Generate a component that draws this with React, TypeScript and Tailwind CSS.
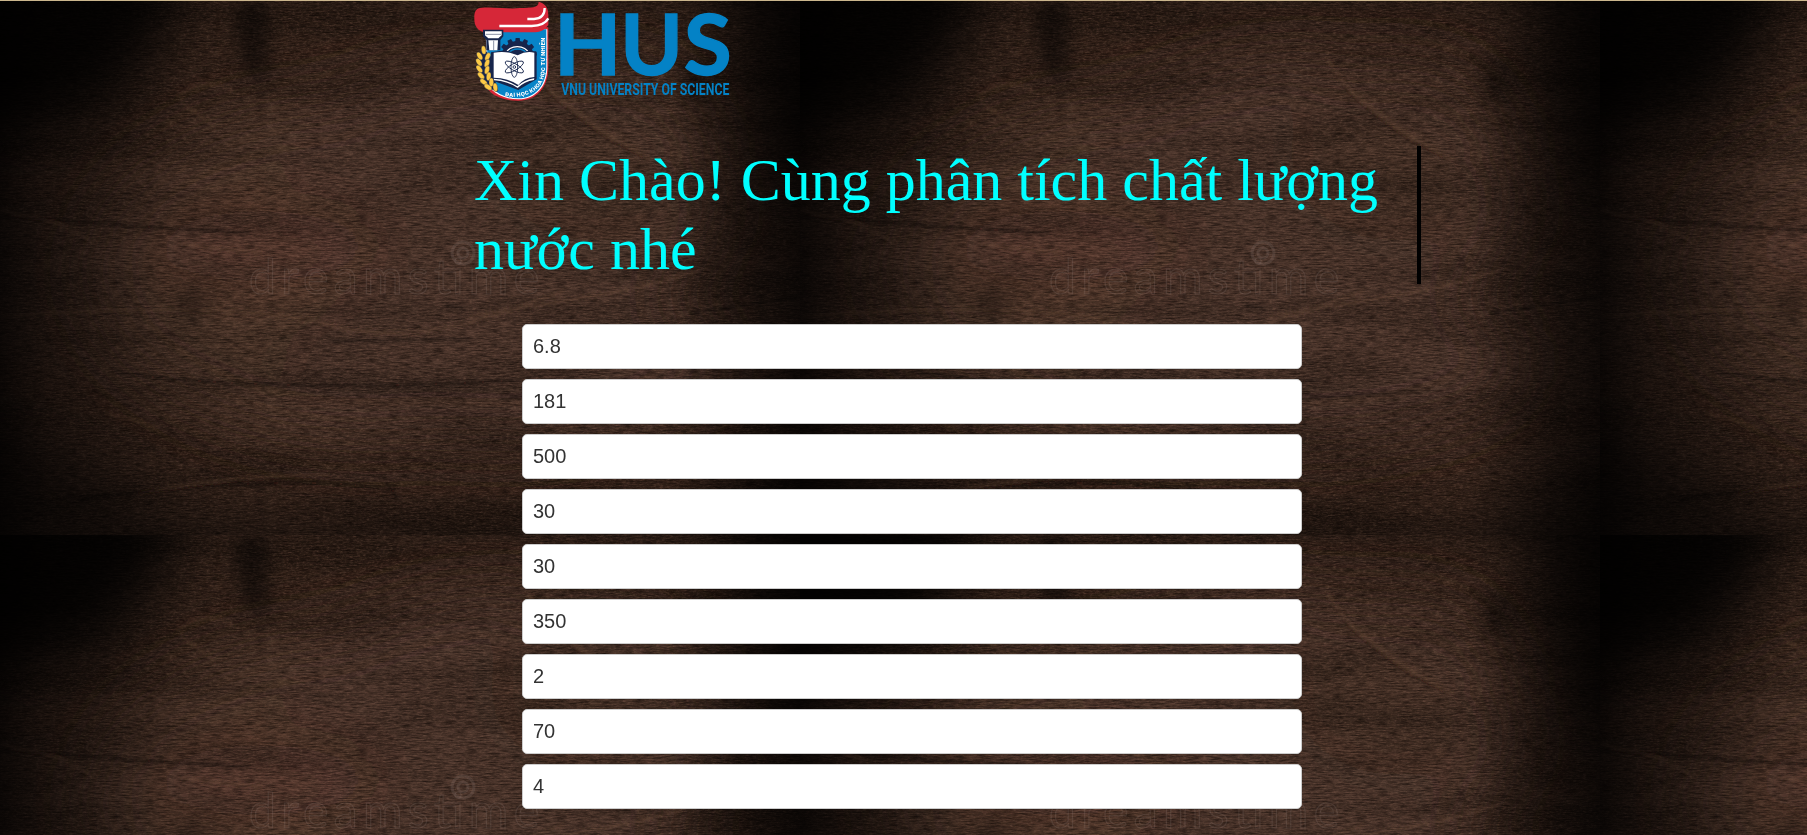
const readings = ["6.8", "181", "500", "30", "30", "350", "2", "70", "4"];

const tiles = [0, 1].flatMap((row) => [0, 1, 2].map((col) => ({ x: col * 800, y: row * 534 })));

function WoodBackground() {
  return (
    <svg
      className="absolute inset-0 -z-10 h-full w-full"
      viewBox="0 0 1807 834"
      preserveAspectRatio="xMinYMin slice"
      aria-hidden="true"
    >
      <defs>
        <linearGradient id="sides">
          <stop offset="0" stopColor="#020101" stopOpacity="0.8" />
          <stop offset="0.06" stopColor="#020101" stopOpacity="0.5" />
          <stop offset="0.22" stopColor="#020101" stopOpacity="0.1" />
          <stop offset="0.35" stopColor="#020101" stopOpacity="0" />
          <stop offset="0.84" stopColor="#020101" stopOpacity="0" />
          <stop offset="0.94" stopColor="#020101" stopOpacity="0.5" />
          <stop offset="1" stopColor="#020101" stopOpacity="0.75" />
        </linearGradient>
        <filter id="soft" x="-60%" y="-60%" width="220%" height="220%">
          <feGaussianBlur stdDeviation="30" />
        </filter>
        <filter id="softer" x="-60%" y="-60%" width="220%" height="220%">
          <feGaussianBlur stdDeviation="9" />
        </filter>
        <filter id="hair" x="-10%" y="-30%" width="120%" height="160%">
          <feGaussianBlur stdDeviation="1.5" />
        </filter>
        <filter id="grain" x="0" y="0" width="100%" height="100%" colorInterpolationFilters="sRGB">
          <feTurbulence type="fractalNoise" baseFrequency="0.09 0.65" numOctaves="4" seed="4" />
          <feColorMatrix values="0 0 0 0 0.03  0 0 0 0 0.01  0 0 0 0 0  1.5 0 0 0 -0.5" />
        </filter>
        <filter id="glint" x="0" y="0" width="100%" height="100%" colorInterpolationFilters="sRGB">
          <feTurbulence type="fractalNoise" baseFrequency="0.3 0.7" numOctaves="3" seed="19" />
          <feColorMatrix values="0 0 0 0 0.52  0 0 0 0 0.38  0 0 0 0 0.31  1.1 0 0 0 -0.45" />
        </filter>
        <filter id="clouds" x="0" y="0" width="100%" height="100%" colorInterpolationFilters="sRGB">
          <feTurbulence type="fractalNoise" baseFrequency="0.005 0.03" numOctaves="4" seed="8" />
          <feColorMatrix values="0 0 0 0 0.02  0 0 0 0 0.01  0 0 0 0 0  2.4 0 0 0 -1" />
        </filter>
        <clipPath id="tileClip">
          <rect width="800" height="534" />
        </clipPath>
        <g id="tile" clipPath="url(#tileClip)">
          <rect width="800" height="534" fill="#38261d" />
          <g filter="url(#soft)">
            <ellipse cx="370" cy="270" rx="280" ry="170" fill="#523a2e" />
            <ellipse cx="500" cy="200" rx="220" ry="140" fill="#50392d" />
            <ellipse cx="260" cy="245" rx="120" ry="35" fill="#5e3d30" />
            <ellipse cx="500" cy="360" rx="220" ry="80" fill="#50392e" />
            <ellipse cx="600" cy="150" rx="110" ry="90" fill="#4b352a" />
          </g>
          <rect width="800" height="534" filter="url(#clouds)" opacity="0.3" />
          <rect width="800" height="534" filter="url(#glint)" opacity="0.75" />
          <rect width="800" height="534" filter="url(#grain)" opacity="0.7" />
          <g filter="url(#hair)" fill="none" strokeWidth="2">
            <g stroke="#76543f" opacity="0.38">
              <path d="M552 92C590 116 618 143 652 158M528 58C543 90 585 120 618 142M178 95Q205 74 234 91M180 100L215 126M0 209C40 218 66 222 90 240M180 243L262 252M0 316C80 310 240 300 330 324S500 312 565 290M105 412L160 426M470 315C565 300 640 290 700 268M140 492Q240 472 330 474" />
            </g>
            <g stroke="#0d0503" opacity="0.5">
              <path d="M544 88C582 119 608 142 645 156M0 216C85 220 126 226 250 232M120 372C230 387 380 388 520 379M445 304L464 307M690 312L800 296M80 498Q310 470 395 490M385 481L398 498M500 398L620 390M330 340L470 338" />
            </g>
          </g>
          <rect width="800" height="534" fill="url(#sides)" />
          <g filter="url(#soft)" fill="#020101">
            <path d="M-60-60H200L155 60L90 115L25 130L-60 140Z" opacity="0.85" />
            <path d="M730-60H860V200H790L750 100Z" opacity="0.55" />
            <path d="M200-60H800V-14L550-10L220-16Z" opacity="0.5" />
            <path d="M-60 405L60 450L200 515L650 530L860 450V620H-60Z" opacity="0.5" />
          </g>
          <g filter="url(#softer)" fill="#060201">
            <path d="M236 0H270L267 85L245 72L235 35Z" opacity="0.5" />
            <path d="M680 65H705L712 110L690 96Z" opacity="0.4" />
            <path d="M175 290L205 285L200 325L180 330Z" opacity="0.25" />
          </g>
          <g fill="none" stroke="#a18f86" strokeOpacity="0.17">
            <text
              x="249"
              y="293"
              fontFamily="Lato, sans-serif"
              fontSize="48"
              textLength="290"
              lengthAdjust="spacing"
              strokeWidth="1.2"
            >
              dreamstime
            </text>
            <circle cx="463" cy="252" r="11" strokeWidth="3" />
            <circle cx="463" cy="252" r="5" strokeWidth="3" />
          </g>
        </g>
      </defs>
      {tiles.map((t) => (
        <use key={`${t.x}-${t.y}`} href="#tile" x={t.x} y={t.y} />
      ))}
    </svg>
  );
}

const leaves = [
  [56, 150, -8],
  [44, 168, -30],
  [68, 170, 24],
  [42, 187, -32],
  [66, 190, 20],
  [43, 207, -36],
  [66, 210, 14],
  [48, 227, -42],
  [71, 229, 6],
  [56, 246, -50],
  [79, 247, 0],
  [69, 261, -58],
  [91, 262, -8],
];

const teeth = [-78, -52, -26, 0, 26, 52, 78];

function Logo() {
  return (
    <svg className="block h-[110px] w-[275px] overflow-visible" viewBox="0 0 825 330" role="img" aria-label="HUS">
      <path d="M62 82H250V200C250 262 215 301 160 302C118 302 88 290 70 270Z" fill="#d92635" />
      <path d="M62 88H247V200C247 259 213 297 160 298C116 298 82 280 66 250Z" fill="#fff" />
      <path d="M66 88H244V200C244 256 210 294 160 295C118 295 84 276 68 246Z" fill="#0784c8" />
      <path
        d="M28 54C27 35 34 23 50 23C90 20 130 28 165 24C198 22 221 25 221 5C240 10 250 22 250 45V75C238 91 226 97 202 97H58C38 92 27 78 28 54Z"
        fill="#d62738"
      />
      <path d="M103 78H200C226 77 242 70 250 55" fill="none" stroke="#fff" strokeWidth="7" />
      <path d="M187 57H207C228 56 239 44 239 24" fill="none" stroke="#fff" strokeWidth="7" />

      <g fill="#17254b">
        <circle cx="158" cy="172" r="49" />
        {teeth.map((a) => (
          <path key={a} d="M150 128L152 114H164L166 128Z" transform={`rotate(${a} 158 172)`} />
        ))}
      </g>
      <path d="M120 162A42 42 0 0 1 194 162" fill="none" stroke="#fff" strokeWidth="4" />
      <path d="M127 163A38 38 0 0 1 189 163" fill="none" stroke="#0784c8" strokeWidth="5" />

      <path d="M60 151Q36 185 44 230Q56 266 100 273L90 240L78 170Z" fill="#17254b" />
      <path d="M54 89H115V109L106 120V151H64V120L54 109Z" fill="#17254b" />
      <path d="M60 94H110V106L100 115H70L60 106Z" fill="#fff" />
      <path d="M70 121H99L97 151H73Z" fill="#fff" />
      <path d="M62 103H108M86 122V150" stroke="#17254b" strokeWidth="1.5" />

      <path d="M78 157L120 151L158 161L196 151L215 157V238L160 270L78 240Z" fill="#17254b" />
      <path d="M86 158Q125 151 158 166Q184 151 208 158V231Q178 233 160 255Q130 234 86 233Z" fill="#fff" />
      <path d="M86 236Q130 239 157 259Q178 239 208 235L207 240Q178 245 158 264Q130 244 87 241Z" fill="#fff" />
      <g fill="none" stroke="#17254b" strokeWidth="2.6">
        <ellipse cx="148" cy="201" rx="10" ry="31" />
        <ellipse cx="148" cy="201" rx="10" ry="31" transform="rotate(60 148 201)" />
        <ellipse cx="148" cy="201" rx="10" ry="31" transform="rotate(-60 148 201)" />
        <circle cx="148" cy="201" r="4" />
      </g>

      <path d="M52 152Q42 205 66 246Q80 266 98 272" fill="none" stroke="#17254b" strokeWidth="9" />
      <g fill="#fdca45" stroke="#17254b" strokeWidth="1">
        {leaves.map(([x, y, r]) => (
          <ellipse key={`${x}-${y}`} cx={x} cy={y} rx="7" ry="13" transform={`rotate(${r} ${x} ${y})`} />
        ))}
      </g>

      <path id="rim" d="M120 288C178 299 240 276 240 205V90" fill="none" />
      <text
        fill="#fff"
        fontFamily="Inter, 'Liberation Sans', sans-serif"
        fontWeight="800"
        fontSize="16"
      >
        <textPath href="#rim" textLength="262" lengthAdjust="spacing">
          ĐẠI HỌC KHOA HỌC TỰ NHIÊN
        </textPath>
      </text>

      <g fill="#0482c6" fontFamily="Lato, sans-serif">
        <g fontSize="254" fontWeight="700" stroke="#0482c6" strokeWidth="4">
          <text x="267" y="226" textLength="202" lengthAdjust="spacingAndGlyphs">H</text>
          <text x="466" y="226" textLength="188" lengthAdjust="spacingAndGlyphs">U</text>
          <text x="656" y="226" textLength="144" lengthAdjust="spacingAndGlyphs">S</text>
        </g>
        <text
          x="289"
          y="286"
          fontFamily="Roboto, sans-serif"
          fontSize="52"
          fontWeight="700"
          textLength="504"
          lengthAdjust="spacingAndGlyphs"
        >
          VNU UNIVERSITY OF SCIENCE
        </text>
      </g>
    </svg>
  );
}

export default function App() {
  return (
    <div className="flex h-[835px] flex-col overflow-hidden bg-[#cbb68d] pt-px">
      <main className="relative isolate flex-1 overflow-hidden pl-[474px]">
        <WoodBackground />
        <div className="-mt-px -ml-[9px]">
          <Logo />
        </div>
        <h1 className="mt-9 w-[947px] border-r-4 border-black font-['Liberation_Serif',serif] text-[60px] leading-[69px] font-normal text-[#00ffff]">
          Xin Chào! Cùng phân tích chất lượng nước nhé
        </h1>
        <form className="mt-10 ml-12 flex w-[780px] flex-col gap-2.5">
          {readings.map((value, i) => (
            <input
              key={i}
              type="text"
              defaultValue={value}
              className="h-[45px] w-full rounded-[5px] border border-[#cccccc] bg-white px-2.5 font-['Liberation_Sans',sans-serif] text-[20px] text-[#333333] outline-none"
            />
          ))}
        </form>
      </main>
    </div>
  );
}
